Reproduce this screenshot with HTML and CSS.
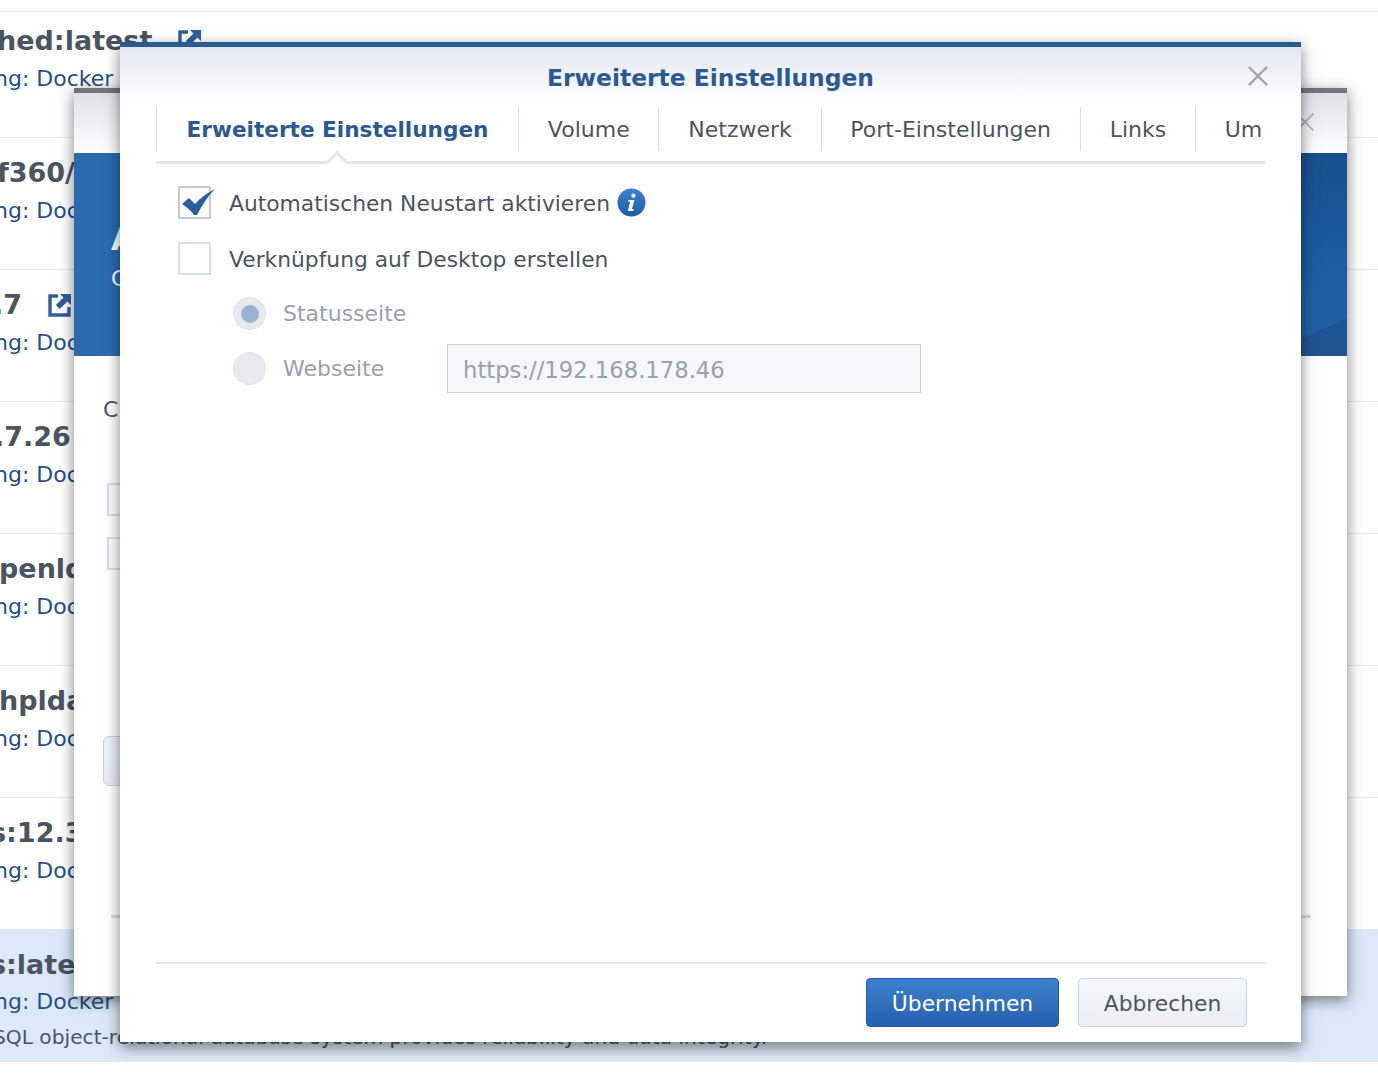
FILE: index.html
```html
<!DOCTYPE html>
<html lang="de">
<head>
<meta charset="utf-8">
<title>Erweiterte Einstellungen</title>
<link rel="stylesheet" href="styles.css">
</head>
<body>
<main class="list">
  <section class="row row-first">
    <div class="name n1">hed:latest <svg class="ext" viewBox="0 0 24 24"><path d="M10 3H2v19h19v-8" fill="none" stroke="#2c5f9e" stroke-width="3.4"/><path d="M12 1h11v11l-3.6-3.6-7.6 7.6-3.9-3.9 7.6-7.6z" fill="#2c5f9e"/></svg></div>
    <div class="sub">ng: Docker</div>
  </section>
  <section class="row">
    <div class="name n2">f360/</div>
    <div class="sub">ng: Docker</div>
  </section>
  <section class="row">
    <div class="name n3">.7 <svg class="ext ext2" viewBox="0 0 24 24"><path d="M10 3H2v19h19v-8" fill="none" stroke="#2c5f9e" stroke-width="3.4"/><path d="M12 1h11v11l-3.6-3.6-7.6 7.6-3.9-3.9 7.6-7.6z" fill="#2c5f9e"/></svg></div>
    <div class="sub">ng: Docker</div>
  </section>
  <section class="row">
    <div class="name n4">.7.26</div>
    <div class="sub">ng: Docker</div>
  </section>
  <section class="row">
    <div class="name n5">penldap</div>
    <div class="sub">ng: Docker</div>
  </section>
  <section class="row">
    <div class="name n6">hpldap</div>
    <div class="sub">ng: Docker</div>
  </section>
  <section class="row">
    <div class="name n7">s:12.3</div>
    <div class="sub">ng: Docker</div>
  </section>
  <section class="row row-selected">
    <div class="name n8">s:latest</div>
    <div class="sub sub-tight">ng: Docker</div>
    <div class="desc">SQL object-relational database system provides reliability and data integrity.</div>
  </section>
</main>

<div class="window window-back">
  <header class="back-head">
    <svg class="close close-back" viewBox="0 0 24 24"><path d="M2 2l20 20M22 2L2 22" fill="none" stroke="#a9adb3" stroke-width="2"/></svg>
  </header>
  <div class="banner">
    <div class="banner-title">A</div>
    <div class="banner-sub">C</div>
  </div>
  <div class="back-body">
    <div class="back-text">C</div>
    <div class="back-box"></div>
    <div class="back-box"></div>
    <div class="back-btn"></div>
    <div class="back-rule"></div>
  </div>
</div>

<div class="window window-front">
  <header class="head">
    <h1 class="title">Erweiterte Einstellungen</h1>
    <svg class="close" viewBox="0 0 24 24"><path d="M2 2l20 20M22 2L2 22" fill="none" stroke="#a3a8ae" stroke-width="2.6"/></svg>
  </header>
  <div class="content">
    <nav class="tabs">
      <div class="tab-list">
        <div class="tab tab-active">Erweiterte Einstellungen</div>
        <div class="tab">Volume</div>
        <div class="tab">Netzwerk</div>
        <div class="tab">Port-Einstellungen</div>
        <div class="tab">Links</div>
        <div class="tab">Umgebung</div>
      </div>
      <span class="notch"></span>
    </nav>
    <form class="form">
      <div class="field">
        <span class="check check-on">
          <svg class="tick" viewBox="0 0 37 30"><path d="M4 18l7-6 6 6C22 12 29 7 37 3 30 10 24 19 19 29h-3C13 25 9 21 4 18z" fill="#2c5f9e"/></svg>
        </span>
        <span class="label">Automatischen Neustart aktivieren</span>
        <svg class="info" viewBox="0 0 30 30"><defs><linearGradient id="ig" x1="0" y1="0" x2="0" y2="1"><stop offset="0" stop-color="#3f83d0"/><stop offset="1" stop-color="#1c5aa6"/></linearGradient></defs><circle cx="15" cy="15" r="14.5" fill="url(#ig)"/><circle cx="17" cy="8" r="2.2" fill="#fff"/><path d="M12 12.5h6l-2.6 9.5h2.2l-.5 1.8h-6l2.6-9.5h-2.2z" fill="#fff"/></svg>
      </div>
      <div class="field">
        <span class="check"></span>
        <span class="label">Verknüpfung auf Desktop erstellen</span>
      </div>
      <div class="field field-radio">
        <span class="radio radio-on"></span>
        <span class="label-off">Statusseite</span>
      </div>
      <div class="field field-radio">
        <span class="radio"></span>
        <span class="label-off label-fixed">Webseite</span>
        <input class="input" type="text" value="https://192.168.178.46" disabled>
      </div>
    </form>
    <footer class="foot">
      <button class="btn btn-primary" type="button">Übernehmen</button>
      <button class="btn" type="button">Abbrechen</button>
    </footer>
  </div>
</div>
</body>
</html>
```
FILE: styles.css
```css
* { box-sizing: border-box; }
html, body { margin: 0; height: 100%; overflow: hidden; background: #fff; }
body { font-family: "DejaVu Sans", sans-serif; font-size: 22px; color: #4a5562; position: relative; width: 1378px; height: 1076px; }

.list { padding-top: 11px; }
.row { height: 132px; border-top: 1px solid #e6eaef; padding-top: 16px; overflow: hidden; }
.row-first { height: 126px; padding-top: 10px; border-top-color: #dfe5ec; }
.row-selected { background: #dce9f9; height: 133px; border-top-color: #dce9f9; }
.name { font-weight: 700; font-size: 27px; line-height: 38px; height: 38px; white-space: nowrap; color: #4a5562; display: flex; align-items: center; }
.sub { font-size: 22px; line-height: 38px; margin-left: -6px; color: #225287; white-space: nowrap; }
.sub-tight { margin-top: -1px; }
.desc { font-size: 20.2px; line-height: 34px; margin: -1px 0 0 -7px; color: #4a5562; white-space: nowrap; }
.n1 { margin-left: -3px; }
.n2 { margin-left: -3px; }
.n3 { margin-left: -7px; }
.n4 { margin-left: -6px; }
.n5 { margin-left: -1px; }
.n6 { margin-left: -1px; }
.n7 { margin-left: -10px; }
.n8 { margin-left: -10px; }
.ext { width: 24px; height: 24px; margin-left: 26px; flex: none; }
.ext2 { margin-left: 26px; }

.window { position: absolute; background: #fff; }
.window-back { left: 74px; top: 88px; width: 1273px; height: 908px; border-top: 5px solid #71757f; box-shadow: 0 4px 14px rgba(0,0,0,.5); }
.window-front { left: 120px; top: 42px; width: 1181px; height: 1000px; border-top: 5px solid #2c5a92; box-shadow: 0 5px 14px rgba(0,0,0,.5); display: flex; flex-direction: column; }

.back-head { height: 60px; position: relative; background: linear-gradient(#dde0e5, #fff); }
.close { position: absolute; right: 32px; top: 18px; width: 22px; height: 22px; }
.close-back { right: 32px; top: 19px; width: 20px; height: 20px; }
.banner { height: 203px; padding: 67px 0 0 37px; color: #fff; background:
  linear-gradient(155deg, transparent 58%, rgba(32,83,144,.85) 58%) right bottom / 46px 70px no-repeat,
  linear-gradient(#17508f, #1f5fa3 70%) right top / 46px 203px no-repeat,
  #2c6ab0; }
.banner-title { font-size: 32px; font-weight: 700; line-height: 38px; }
.banner-sub { font-size: 22px; line-height: 34px; margin-top: 4px; }
.back-body { padding: 40px 36px 0 29px; display: flex; flex-direction: column; }
.back-text { line-height: 28px; }
.back-box { width: 33px; height: 33px; margin: 0 0 21px 4px; border: 2px solid #d5dfeb; }
.back-box:nth-child(2) { margin-top: 59px; }
.back-btn { width: 170px; height: 50px; margin-top: 145px; border: 1px solid #c5d2e0; border-radius: 6px; background: linear-gradient(#eef2f7, #e8edf3); }
.back-rule { height: 3px; margin: 129px 0 0 8px; background: #dcdcdc; }

.head { height: 60px; flex: none; display: flex; align-items: center; justify-content: center; padding-top: 2px; position: relative; background: linear-gradient(#e1e7ef, #fff 92%); }
.title { margin: 0; font-size: 23.4px; font-weight: 700; color: #2b5a90; }
.content { flex: 1; padding: 0 36px; display: flex; flex-direction: column; min-height: 0; }

.tabs { height: 57px; flex: none; position: relative; border-bottom: 3px solid #e6e6e6; }
.tab-list { display: flex; overflow: hidden; height: 44px; margin-right: 2px; }
.tab { padding: 1px 28.8px 0; height: 44px; line-height: 44px; border-left: 1px solid #d5e0ec; white-space: nowrap; flex: none; color: #4a5562; }
.tab-active { font-weight: 700; font-size: 21.6px; color: #2b5a90; padding: 1px 29.6px 0; }
.notch { position: absolute; left: 173px; bottom: -9px; width: 16px; height: 16px; background: #fff; border: 3px solid #e6e6e6; border-right: 0; border-bottom: 0; transform: rotate(45deg); }

.form { flex: 1; padding-top: 10px; display: flex; flex-direction: column; }
.field { height: 56px; flex: none; display: flex; align-items: center; padding-left: 22px; }
.field-radio { height: 55px; padding-left: 77px; }
.check { width: 33px; height: 33px; flex: none; border: 2px solid #d5dfeb; margin-right: 18px; position: relative; background: #fff; }
.check-on { border-color: #bfcbdb; }
.tick { position: absolute; left: -2px; top: -2px; width: 37px; height: 30px; }
.label { color: #4a5562; white-space: nowrap; font-size: 21.8px; padding-top: 3px; }
.info { width: 29px; height: 29px; margin-left: 7px; flex: none; }
.radio { width: 33px; height: 33px; flex: none; border-radius: 50%; background: #e6eaf0; border: 1px dashed #d8dfe8; margin-right: 17px; display: flex; align-items: center; justify-content: center; }
.radio-on::after { content: ""; width: 18px; height: 18px; border-radius: 50%; background: #9ab3d4; }
.label-off { color: #95a1ae; white-space: nowrap; }
.label-fixed { width: 164px; }
.input { width: 474px; height: 49px; margin-top: -1px; padding: 3px 15px 0; font: inherit; font-size: 22.7px; color: #95a1ae; background: #f5f7f9; border: 1px solid #c8d3df; border-radius: 0; -webkit-text-fill-color: #95a1ae; opacity: 1; }

.foot { height: 80px; flex: none; border-top: 2px solid #e3e3e3; display: flex; justify-content: flex-end; gap: 19px; padding: 14px 18px 0 0; }
.btn { width: 169px; height: 49px; font: inherit; font-size: 21.8px; color: #4a5562; background: linear-gradient(#f4f8fc, #ebeff4); border: 1px solid #c8d5e3; border-radius: 4px; padding: 2px 0 0; }
.btn-primary { width: 193px; color: #fff; background: linear-gradient(#3d80cd, #2461ae); border-color: #2159a6; }
```
